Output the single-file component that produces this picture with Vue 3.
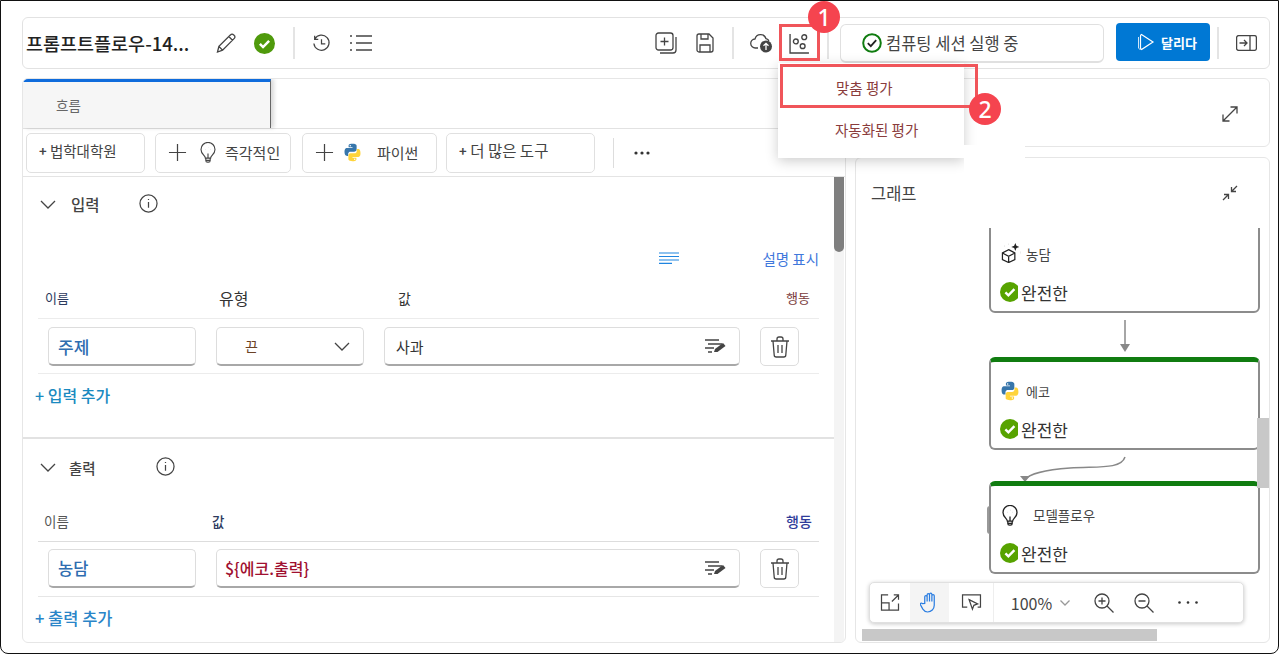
<template>
  <div class="frame">
    <!-- 상단 도구 모음 -->
    <header class="topbar">
      <h1 class="title">프롬프트플로우-14...</h1>
      <svg class="ic pen" viewBox="0 0 22 22"><path d="M2.5 20l1.4-5.6L15.6 2.7a2 2 0 0 1 2.9 0l.8.8a2 2 0 0 1 0 2.9L7.6 18.2zM3.9 14.4l3.7 3.8M13.8 4.5l3.7 3.7" /></svg>
      <svg class="ok-big" viewBox="0 0 20 20"><circle cx="10" cy="10" r="10" fill="#4f9a0c" /><path d="M5.6 10.4l3 3 5.8-6" fill="none" stroke="#fff" stroke-width="2.4" /></svg>
      <i class="sep s1"></i>
      <svg class="ic hist" viewBox="0 0 20 20"><path d="M3 5.2A8 8 0 1 1 2 10M2.8 1.8v3.8h3.8M10 5.5v5h4" /></svg>
      <svg class="ic list" viewBox="0 0 22 18"><path d="M6 2h16M6 9h16M6 16h16M0 2h2M0 9h2M0 16h2" /></svg>
      <div class="grow"></div>
      <svg class="ic addp" viewBox="0 0 22 22"><rect x="1" y="1" width="17" height="17" rx="2.5" /><path d="M9.5 5.5v8M5.5 9.5h8M21 5v13a3 3 0 0 1-3 3H5" /></svg>
      <svg class="ic save" viewBox="0 0 18 20"><path d="M1 3a2 2 0 0 1 2-2h10l4 4v12a2 2 0 0 1-2 2H3a2 2 0 0 1-2-2zM5 1v5h7V1M4 19v-7h10v7" /></svg>
      <i class="sep s2"></i>
      <svg class="cloud" viewBox="0 0 23 20"><path d="M8 15H5.5a4.5 4.5 0 0 1-.5-9 5.7 5.7 0 0 1 11-.3 3.8 3.8 0 0 1 3 2.8" fill="none" stroke="#444" stroke-width="1.3" /><circle cx="16" cy="13.5" r="6" fill="#444" /><path d="M16 17v-6.5M13.5 12.8L16 10.4l2.5 2.4" fill="none" stroke="#fff" stroke-width="1.3" /></svg>
      <div class="eval-btn">
        <svg class="ic chart" viewBox="0 0 20 20"><path d="M1 1v18h18" /><circle cx="6.5" cy="8" r="2.3" /><circle cx="14.5" cy="4" r="2.3" /><circle cx="13" cy="12.5" r="2.3" /></svg>
      </div>
      <i class="sep s3"></i>
      <div class="session">
        <svg viewBox="0 0 20 20"><circle cx="10" cy="10" r="8.8" fill="none" stroke="#107c10" stroke-width="2" /><path d="M5.8 10.2l3 3 5.4-6" fill="none" stroke="#222" stroke-width="1.8" /></svg>
        <span>컴퓨팅 세션 실행 중</span>
      </div>
      <button class="run">
        <svg viewBox="0 0 20 20"><path d="M6.5 2.5L18 10 6.500 17.500a1.500 1.500 0 0 1-1-1.500V4a1.500 1.500 0 0 1 1-1.500z" fill="none" stroke="#fff" stroke-width="1.2" /><path d="M3.500 5v11l2 2" fill="none" stroke="#cfe6fa" stroke-width="1" /></svg>
        달리다
      </button>
      <i class="sep s4"></i>
      <svg class="ic pane" viewBox="0 0 21 16"><rect x=".6" y=".6" width="19.8" height="14.8" rx="2" /><path d="M14 1v14M3.5 8h7M8 5l3 3-3 3" /></svg>
    </header>

    <div class="columns">
      <!-- 왼쪽: 흐름 편집기 -->
      <section class="editor">
        <div class="tabs"><div class="tab">흐름</div></div>
        <div class="tools">
          <button class="tool t1"><small>+</small> 법학대학원</button>
          <button class="tool t2">
            <svg class="ic plus" viewBox="0 0 20 20"><path d="M10 1v18M1 10h18" /></svg>
            <svg class="ic bulb" viewBox="0 0 18 24"><path d="M6 18.5c0-3-5-4.500-5-10a8 8 0 0 1 16 0c0 5.500-5 7-5 10zM6.500 18.500V21a2 2 0 0 0 2 2h1a2 2 0 0 0 2-2v-2.500M6.500 21h5M9 18v-5M6.500 8.500h.1M11.500 8.500h.1M9 6h.1" /></svg>
            <span>즉각적인</span>
          </button>
          <button class="tool t3">
            <svg class="ic plus" viewBox="0 0 20 20"><path d="M10 1v18M1 10h18" /></svg>
            <svg class="py" viewBox="0 0 24 24"><path fill="#3776ab" fill-rule="evenodd" d="M11.900 1C6.800 1 7.100 3.200 7.100 3.200v2.300H12v.8H5.200S1.900 5.900 1.900 11.200s2.900 5.100 2.900 5.100h1.800v-2.500s-.1-2.900 2.900-2.900h4.900s2.800 0 2.800-2.700V3.700S17.700 1 11.900 1zM9.200 2.600a.9.9 0 1 1 0 1.800.9.9 0 0 1 0-1.800z" /><path fill="#ffd43b" fill-rule="evenodd" transform="rotate(180 12 12)" d="M11.900 1C6.800 1 7.100 3.200 7.100 3.200v2.300H12v.8H5.200S1.900 5.900 1.900 11.200s2.900 5.100 2.900 5.100h1.800v-2.500s-.1-2.900 2.900-2.900h4.900s2.800 0 2.800-2.700V3.700S17.700 1 11.900 1zM9.200 2.600a.9.9 0 1 1 0 1.800.9.9 0 0 1 0-1.800z" /></svg>
            <span>파이썬</span>
          </button>
          <button class="tool t4"><small>+</small> 더 많은 도구</button>
          <i class="tool-sep"></i>
          <svg class="more" viewBox="0 0 16 4"><circle cx="2" cy="2" r="1.600" /><circle cx="8" cy="2" r="1.600" /><circle cx="14" cy="2" r="1.600" /></svg>
        </div>

        <div class="scroll">
          <div class="content">
            <!-- 입력 -->
            <div class="sec-head in">
              <svg class="ic chev" viewBox="0 0 16 9"><path d="M1 1l7 7 7-7" /></svg>
              <b>입력</b>
              <svg class="ic info" viewBox="0 0 20 20"><circle cx="10" cy="10" r="9" /><path d="M10 8.500v6M10 5.200v1.200" /></svg>
            </div>
            <div class="desc">
              <svg class="lines" viewBox="0 0 20 12"><path d="M0 1h20M0 4.500h20M0 8h20M0 11.300h13" /></svg>
              <a>설명 표시</a>
            </div>
            <div class="cols in-cols">
              <span class="c-name">이름</span>
              <span class="c-type">유형</span>
              <span class="c-val">값</span>
              <span class="c-act">행동</span>
            </div>
            <div class="row">
              <div class="field name">주제</div>
              <div class="field type"><span>끈</span><svg class="ic" viewBox="0 0 16 9"><path d="M1 1l7 7 7-7" /></svg></div>
              <div class="field val plain">
                <span>사과</span>
                <svg class="edit" viewBox="0 0 22 16"><path d="M1 2h14M4 6h14M1 10h9M4 14h4" stroke="#444" stroke-width="1.3" /><path d="M10 14l1-3 8-6 2.500 3-8 6z" fill="#444" /></svg>
              </div>
              <div class="trash-box"><svg class="ic trash" viewBox="0 0 20 22"><path d="M1 5h18M7 5V3a2 2 0 0 1 2-2h2a2 2 0 0 1 2 2v2M3 5l1.200 14a2 2 0 0 0 2 2h7.600a2 2 0 0 0 2-2L17 5M8 9v8M12 9v8" /></svg></div>
            </div>
            <a class="add a-in">+ 입력 추가</a>

            <!-- 출력 -->
            <div class="sec-head out">
              <svg class="ic chev" viewBox="0 0 16 9"><path d="M1 1l7 7 7-7" /></svg>
              <b>출력</b>
              <svg class="ic info" viewBox="0 0 20 20"><circle cx="10" cy="10" r="9" /><path d="M10 8.500v6M10 5.200v1.200" /></svg>
            </div>
            <div class="cols out-cols">
              <span class="c-name">이름</span>
              <span class="c-val2">값</span>
              <span class="c-act">행동</span>
            </div>
            <div class="row out-row">
              <div class="field name">농담</div>
              <div class="field val expr">
                <span>${에코.출력}</span>
                <svg class="edit" viewBox="0 0 22 16"><path d="M1 2h14M4 6h14M1 10h9M4 14h4" stroke="#444" stroke-width="1.3" /><path d="M10 14l1-3 8-6 2.500 3-8 6z" fill="#444" /></svg>
              </div>
              <div class="trash-box"><svg class="ic trash" viewBox="0 0 20 22"><path d="M1 5h18M7 5V3a2 2 0 0 1 2-2h2a2 2 0 0 1 2 2v2M3 5l1.200 14a2 2 0 0 0 2 2h7.600a2 2 0 0 0 2-2L17 5M8 9v8M12 9v8" /></svg></div>
            </div>
            <a class="add a-out">+ 출력 추가</a>
          </div>
          <div class="track"><div class="thumb"></div></div>
        </div>
      </section>

      <!-- 오른쪽: 그래프 -->
      <div class="side">
        <div class="card top-card">
          <svg class="ic grow-ic" viewBox="0 0 16 16"><path d="M1 15L15 1M8.500 1H15v6.500M1 8.500V15h6.500" /></svg>
        </div>
        <div class="card graph">
          <div class="graph-head">
            <span>그래프</span>
            <svg class="ic shrink-ic" viewBox="0 0 16 16"><path d="M1 15l5-5M2 9.500h4.500V14M15 1l-5 5M14 6.500H9.500V2" /></svg>
          </div>
          <div class="canvas">
            <svg class="edges" viewBox="0 0 412 414">
              <path d="M269 92v27" stroke="#888" stroke-width="1.500" fill="none" />
              <path d="M264 116h10l-5 8z" fill="#888" />
              <path d="M269 229c-4 13-30 9-55 11-25 2-40 5-46 12" stroke="#888" stroke-width="1.500" fill="none" />
              <path d="M164 248l10 0-5 6z" fill="#888" />
            </svg>
            <div
              v-for="n in nodes"
              :key="n.label"
              class="node"
              :class="n.cls"
              :style="{ top: n.top + 'px', height: n.height + 'px' }"
            >
              <div class="node-label">
                <svg v-if="n.icon === 'llm'" class="ic node-ic" viewBox="0 0 22 22"><path d="M8 8l6.500 3.500v7L8 21.500 1.500 18.500v-7zM1.500 11.500L8 15l6.500-3.500M8 15v6.500" /><path d="M15 1l1.200 3 3 1.200-3 1.200-1.200 3-1.200-3-3-1.200 3-1.200z" fill="#222" stroke="none" /><path d="M8 2.500h.1M20.500 11h.1M4 4.500h.1" stroke-width="2" /></svg>
                <svg v-else-if="n.icon === 'py'" class="py" viewBox="0 0 24 24"><path fill="#3776ab" fill-rule="evenodd" d="M11.900 1C6.800 1 7.100 3.200 7.100 3.200v2.300H12v.8H5.200S1.900 5.900 1.900 11.200s2.900 5.100 2.900 5.100h1.800v-2.500s-.1-2.900 2.900-2.900h4.900s2.800 0 2.800-2.700V3.700S17.700 1 11.900 1zM9.200 2.600a.9.9 0 1 1 0 1.800.9.9 0 0 1 0-1.800z" /><path fill="#ffd43b" fill-rule="evenodd" transform="rotate(180 12 12)" d="M11.900 1C6.800 1 7.100 3.200 7.100 3.200v2.300H12v.8H5.200S1.900 5.900 1.900 11.200s2.900 5.100 2.900 5.100h1.800v-2.500s-.1-2.900 2.900-2.900h4.900s2.800 0 2.800-2.700V3.700S17.700 1 11.900 1zM9.200 2.600a.9.9 0 1 1 0 1.800.9.9 0 0 1 0-1.800z" /></svg>
                <svg v-else class="ic node-ic bulb" viewBox="0 0 18 24"><path d="M6 18.500c0-3-5-4.500-5-10a8 8 0 0 1 16 0c0 5.500-5 7-5 10zM6.500 18.500V21a2 2 0 0 0 2 2h1a2 2 0 0 0 2-2v-2.500M6.500 21h5M9 18v-5M6.500 8.500h.1M11.500 8.500h.1M9 6h.1" /></svg>
                <span>{{ n.label }}</span>
              </div>
              <div class="status">
                <svg viewBox="0 0 18 20"><circle cx="10" cy="10" r="10" fill="#57a300" /><path d="M5.400 10.400l3 3 6-6.200" fill="none" stroke="#fff" stroke-width="2.400" /></svg>
                <span>완전한</span>
              </div>
            </div>

            <div class="zoombar">
              <div class="zb fit"><svg class="ic" viewBox="0 0 20 18"><path d="M8 1H1v16h18v-7M1 9.500h8V17M12 8l7-7M14 1h5v5" /></svg></div>
              <div class="zb hand"><svg viewBox="0 0 20 22" fill="none" stroke="#2a7de1" stroke-width="1.300"><path d="M5 12V5a1.200 1.200 0 0 1 2.500 0v5-7a1.200 1.200 0 0 1 2.500 0v7-7.500a1.200 1.200 0 0 1 2.500 0V10 4a1.200 1.200 0 0 1 2.500 0v10a7 7 0 0 1-7 7c-3 0-4-1.500-5-3l-2.500-4.500c-.8-1.500 1-2.500 2-1.300z" /></svg></div>
              <div class="zb sel"><svg class="ic" viewBox="0 0 21 18"><path d="M6 14H1V1h19v13h-3M8 6l9 4.500-4 1.500-1.500 4z" /></svg></div>
              <div class="zb pct"><span>100%</span><svg class="ic" viewBox="0 0 10 6"><path d="M.5.500L5 5 9.500.500" /></svg></div>
              <div class="zb zi"><svg class="ic" viewBox="0 0 20 20"><circle cx="8" cy="8" r="7" /><path d="M13 13l6.500 6.500M8 4.500v7M4.500 8h7" /></svg></div>
              <div class="zb zo"><svg class="ic" viewBox="0 0 20 20"><circle cx="8" cy="8" r="7" /><path d="M13 13l6.500 6.500M4.500 8h7" /></svg></div>
              <div class="zb dots"><svg viewBox="0 0 20 3"><circle cx="1.500" cy="1.500" r="1.300" /><circle cx="10" cy="1.500" r="1.300" /><circle cx="18.500" cy="1.500" r="1.300" /></svg></div>
            </div>
            <div class="bar-v"></div>
            <div class="bar-h"></div>
          </div>
        </div>
      </div>
    </div>

    <!-- 드롭다운 메뉴와 주석 -->
    <div class="menu">
      <div class="menu-item first">맞춤 평가</div>
      <div class="menu-item second">자동화된 평가</div>
    </div>
    <div class="patch"></div>
    <div class="mark m1"></div>
    <div class="mark m2"></div>
    <div class="badge b1">1</div>
    <div class="badge b2">2</div>
  </div>
</template>

<script setup>
// 그래프 노드 (캔버스 기준 위치)
const nodes = [
  { label: "농담", icon: "llm", top: -30, height: 115, cls: "n1" },
  { label: "에코", icon: "py", top: 129, height: 93, cls: "n2" },
  { label: "모델플로우", icon: "bulb", top: 253, height: 93, cls: "n3" },
];
</script>

<style scoped>
.frame {
  position: relative;
  box-sizing: border-box;
  width: 1279px;
  height: 654px;
  padding: 16px 8px 10px 21px;
  border: 1.5px solid #111;
  border-radius: 0 0 8px 8px;
  background: #fff;
  color: #333;
  font-family: "Noto Sans CJK KR", "Noto Sans", sans-serif;
  overflow: hidden;
}
.ic {
  fill: none;
  stroke: #444;
  stroke-width: 1.3;
  flex: none;
}
.topbar {
  position: relative;
  display: flex;
  align-items: center;
  box-sizing: border-box;
  height: 52px;
  border: 1px solid #e2e2e2;
  border-radius: 6px;
  padding: 0 12px 0 3px;
}
.title {
  margin: 0;
  width: 190px;
  font-size: 18.5px;
  font-weight: 500;
  color: #222;
  white-space: nowrap;
}
.pen { width: 22px; height: 22px; margin-left: -1px; }
.ok-big { width: 21px; height: 21px; margin-left: 17px; flex: none; }
.sep { width: 2px; height: 32px; background: #e4e4e4; flex: none; }
.s1 { margin-left: 18px; }
.hist { width: 19px; height: 19px; margin-left: 17px; }
.list { width: 22px; height: 18px; margin-left: 19px; }
.grow { flex: 1; }
.addp { width: 22px; height: 22px; }
.save { width: 18px; height: 20px; margin-left: 19px; }
.s2 { margin-left: 18px; }
.cloud { width: 23px; height: 20px; margin-left: 16px; flex: none; }
.eval-btn {
  display: flex;
  align-items: center;
  justify-content: center;
  width: 41px;
  height: 36px;
  margin-left: 7px;
}
.chart { width: 21px; height: 21px; margin-left: -2px; }
.s3 { margin-left: 6px; }
.session {
  display: flex;
  align-items: center;
  box-sizing: border-box;
  width: 264px;
  height: 39px;
  margin-left: 11px;
  padding-left: 21px;
  border: 1px solid #e0e0e0;
  border-bottom-width: 2px;
  border-radius: 6px;
  font-size: 16.5px;
  color: #444;
}
.session svg { width: 20px; height: 20px; margin-right: 4px; }
.run {
  display: flex;
  align-items: center;
  gap: 6px;
  box-sizing: border-box;
  width: 94px;
  height: 38px;
  margin: 0 0 2px 12px;
  padding: 0 0 0 19px;
  border: 0;
  border-radius: 4px;
  background: #0078d4;
  color: #fff;
  font: 700 13px "Noto Sans CJK KR", sans-serif;
}
.run svg { width: 20px; height: 20px; }
.s4 { margin-left: 7px; }
.pane { width: 21px; height: 16px; margin-left: 17px; }

.columns {
  display: flex;
  gap: 9px;
  height: 565px;
  margin-top: 9px;
}
.editor {
  display: flex;
  flex-direction: column;
  box-sizing: border-box;
  width: 824px;
  flex: none;
  border: 1px solid #e6e6e6;
  border-radius: 6px;
  overflow: hidden;
}
.tabs {
  height: 49px;
  flex: none;
  border-bottom: 1px solid #e2e2e2;
}
.tab {
  box-sizing: border-box;
  width: 248px;
  height: 49px;
  padding: 13px 0 0 33px;
  border-top: 3px solid #0f6cdc;
  border-right: 1px solid #666;
  background: #f6f6f6;
  box-shadow: 3px 0 4px rgba(0, 0, 0, 0.15);
  font-size: 13.5px;
  color: #666;
}
.tools {
  display: flex;
  align-items: center;
  height: 47px;
  flex: none;
  padding-left: 3px;
  border-bottom: 1px solid #e4e4e4;
}
.tool {
  display: flex;
  align-items: center;
  box-sizing: border-box;
  height: 40px;
  padding: 0 0 0 12px;
  background: #fff;
  border: 1px solid #e0e0e0;
  border-radius: 5px;
  font: 15px "Noto Sans CJK KR", sans-serif;
  color: #444;
  white-space: pre;
}
.tool small { font-size: 13px; font-weight: 700; }
.t1 { width: 119px; padding-bottom: 5px; font-size: 14.5px; }
.t2 { width: 136px; margin-left: 10px; }
.t3 { width: 135px; margin-left: 11px; }
.t4 { width: 149px; margin-left: 9px; padding-bottom: 5px; font-size: 15.5px; }
.plus { width: 19px; height: 19px; margin-right: 13px; }
.t3 .plus { margin-right: 9px; }
.bulb { width: 16px; height: 21px; margin-right: 9px; }
.py { width: 19px; height: 19px; flex: none; }
.t3 span { margin-left: 15px; }
.tool-sep { width: 1px; height: 30px; margin-left: 18px; background: #ddd; }
.more { width: 16px; height: 4px; margin-left: 20px; fill: #333; flex: none; }

.scroll {
  position: relative;
  flex: 1;
  display: flex;
  min-height: 0;
}
.content {
  flex: 1;
  min-width: 0;
}
.track {
  width: 10px;
  flex: none;
  margin-right: 1px;
  background: #f4f4f4;
}
.thumb {
  height: 75px;
  border-radius: 0 0 5px 5px;
  background: #7f7f7f;
}
.sec-head {
  display: flex;
  align-items: center;
}
.sec-head b { font-weight: 500; color: #444; }
.sec-head.in { height: 54px; padding-left: 17px; }
.sec-head.in b { margin-left: 15px; font-size: 15.5px; }
.sec-head.in .info { margin-left: 39px; margin-top: -2px; }
.sec-head.out { height: 56px; padding-left: 17px; }
.sec-head.out b { margin-left: 13px; font-size: 14.5px; }
.sec-head.out .info { margin-left: 60px; margin-top: -2px; }
.chev { width: 16px; height: 9px; }
.info { width: 19px; height: 19px; }
.desc {
  display: flex;
  align-items: center;
  justify-content: flex-end;
  height: 22px;
  margin: 16px 0 2px;
  padding-right: 15px;
  gap: 83px;
}
.lines { width: 20px; height: 12px; fill: none; stroke: #1f85e0; stroke-width: 1.2; margin-top: -1px; }
.desc a { font-size: 14.5px; color: #3f78dc; }
.cols {
  position: relative;
  display: flex;
  align-items: center;
  box-sizing: border-box;
  margin: 0 15px;
  padding-top: 6px;
  border-bottom: 1px solid #ececec;
}
.in-cols { height: 48px; }
.out-cols { height: 47px; border-bottom-color: #ddd; }
.cols span { font-size: 13px; }
.c-name { width: 174px; margin-left: 7px; color: #2d3a5e; }
.cols .c-type { width: 179px; color: #333; font-size: 16px; }
.cols .c-val { width: 388px; color: #333; font-size: 14px; }
.cols .c-val2 { width: 574px; margin-left: 0; color: #2d3a5e; font-weight: 500; font-size: 13.5px; }
.c-act { color: #7a3b3b; }
.out-cols .c-name { width: 168px; margin-left: 6px; color: #555; font-size: 13.5px; }
.out-cols .c-act { color: #2f3c9a; font-weight: 500; font-size: 14px; }
.row {
  display: grid;
  grid-template-columns: 148px 148px 356px 39px;
  column-gap: 20px;
  align-items: start;
  height: 55px;
  box-sizing: border-box;
  margin: 0 15px;
  padding: 8px 0 0 10px;
  border-bottom: 1px solid #ececec;
}
.out-row {
  grid-template-columns: 148px 524px 39px;
  height: 55px;
  padding-top: 7px;
  border-bottom-color: #e6e6e6;
}
.field {
  display: flex;
  align-items: center;
  box-sizing: border-box;
  height: 39px;
  padding: 0 9px;
  border: 1px solid #ddd;
  border-bottom: 2px solid #a8a8a8;
  border-radius: 5px;
}
.name { font-size: 17px; font-weight: 500; color: #2f6db0; }
.out-row .name { font-size: 16.5px; font-weight: 500; color: #2f6db0; }
.type { justify-content: space-between; padding: 0 13px 0 28px; font-size: 14px; color: #6b4226; }
.type .ic { width: 16px; height: 9px; }
.val { justify-content: space-between; padding: 0 13px 0 11px; font-size: 15px; color: #333; }
.expr { padding-left: 8px; color: #a01030; font-size: 16px; font-weight: 500; }
.edit { width: 22px; height: 16px; flex: none; }
.trash-box {
  display: flex;
  align-items: center;
  justify-content: center;
  box-sizing: border-box;
  height: 39px;
  border: 1px solid #ddd;
  border-radius: 5px;
}
.trash { width: 20px; height: 22px; }
.add {
  display: block;
  padding-left: 12px;
  font-weight: 500;
}
.a-in {
  height: 65px;
  padding-top: 9px;
  box-sizing: border-box;
  border-bottom: 2px solid #e2e2e2;
  color: #1a8ac0;
  font-size: 16px;
}
.a-out { padding-top: 9px; color: #2a85c8; font-size: 16.5px; }

.side {
  flex: 1;
  display: flex;
  flex-direction: column;
  gap: 10px;
  min-width: 0;
}
.card {
  box-sizing: border-box;
  border: 1px solid #e6e6e6;
  border-radius: 6px;
}
.top-card {
  display: flex;
  align-items: center;
  justify-content: flex-end;
  height: 69px;
  padding: 2px 31px 0 0;
}
.grow-ic, .shrink-ic { width: 16px; height: 16px; }
.graph {
  flex: 1;
  display: flex;
  flex-direction: column;
  min-height: 0;
  overflow: hidden;
}
.graph-head {
  display: flex;
  align-items: center;
  justify-content: space-between;
  flex: none;
  height: 70px;
  padding: 0 31px 0 15px;
  font-size: 16.5px;
  color: #444;
}
.canvas {
  position: relative;
  flex: 1;
  overflow: hidden;
}
.edges {
  position: absolute;
  left: 0;
  top: 0;
  width: 412px;
  height: 414px;
}
.node {
  position: absolute;
  left: 133px;
  display: flex;
  flex-direction: column;
  justify-content: flex-end;
  box-sizing: border-box;
  width: 271px;
  padding: 0 9px 8px;
  border: 2px solid #8c8c8c;
  border-radius: 6px;
  background: #fff;
}
.n2, .n3 { border-top: 5px solid #107c10; }
.n3::before {
  content: "";
  position: absolute;
  left: -4px;
  top: 20px;
  width: 4px;
  height: 28px;
  border-left: 2px solid #999;
  border-radius: 3px 0 0 3px;
  box-sizing: border-box;
}
.node-label {
  display: flex;
  align-items: center;
  height: 24px;
  margin-bottom: 15px;
  font-size: 13px;
  color: #444;
}
.node-ic { width: 21px; height: 21px; margin: -3px 4px 0 1px; stroke: #222; }
.node-ic.bulb { width: 16px; height: 21px; margin: 0 15px 0 2px; stroke: #222; stroke-width: 1.5; }
.node-label .py { width: 20px; height: 20px; margin-right: 6px; }
.n1 .node-label { font-size: 13.5px; }
.n3 .node-label { font-size: 13.5px; }
.status {
  display: flex;
  align-items: center;
  height: 22px;
  gap: 3px;
  font-size: 17px;
  color: #333;
}
.status svg { width: 18px; height: 20px; flex: none; }
.zoombar {
  position: absolute;
  left: 13px;
  top: 354px;
  display: flex;
  width: 375px;
  height: 41px;
  box-sizing: border-box;
  border: 1px solid #e0e0e0;
  border-radius: 5px;
  background: #fff;
  box-shadow: 0 1px 4px rgba(0, 0, 0, 0.22);
}
.zb {
  display: flex;
  align-items: center;
  justify-content: center;
  flex: none;
  height: 100%;
}
.fit { width: 40px; }
.fit .ic { width: 20px; height: 17px; }
.hand { width: 39px; background: #f4f4f4; }
.hand svg { width: 19px; height: 21px; }
.sel { width: 45px; border-right: 1px solid #eee; box-sizing: border-box; }
.sel .ic { width: 21px; height: 17px; }
.pct { width: 90px; gap: 8px; padding-left: 3px; box-sizing: border-box; font-size: 16px; color: #444; }
.pct .ic { width: 10px; height: 6px; stroke: #999; }
.zi { width: 40px; }
.zo { width: 39px; }
.zi .ic, .zo .ic { width: 20px; height: 20px; }
.dots { width: 50px; }
.dots svg { width: 20px; height: 3px; fill: #333; }
.bar-v {
  position: absolute;
  right: 0;
  top: 190px;
  width: 12px;
  height: 70px;
  background: #c8c8c8;
}
.bar-h {
  position: absolute;
  left: 6px;
  bottom: 1px;
  width: 295px;
  height: 12px;
  background: #c8c8c8;
}

.menu {
  position: absolute;
  left: 777px;
  top: 62px;
  width: 186px;
  height: 95px;
  background: #fff;
  box-shadow: 0 3px 12px rgba(0, 0, 0, 0.2);
}
.menu-item {
  position: absolute;
  font-size: 14.5px;
  color: #8a3c3c;
}
.first { left: 58px; top: 14px; }
.second { left: 57px; top: 56px; }
.patch {
  position: absolute;
  left: 963px;
  top: 144px;
  width: 61px;
  height: 28px;
  background: #fff;
}
.mark {
  position: absolute;
  box-sizing: border-box;
  border: 3px solid #f0555a;
}
.m1 { left: 778px; top: 23px; width: 41px; height: 37px; }
.m2 { left: 779px; top: 63px; width: 198px; height: 44px; }
.badge {
  position: absolute;
  display: flex;
  align-items: center;
  justify-content: center;
  width: 32px;
  height: 32px;
  border-radius: 50%;
  background: #f5444f;
  color: #fff;
  font: 500 23px "Noto Sans", sans-serif;
}
.b1 { left: 807px; top: 0; }
.b2 { left: 968px; top: 92px; }
</style>
